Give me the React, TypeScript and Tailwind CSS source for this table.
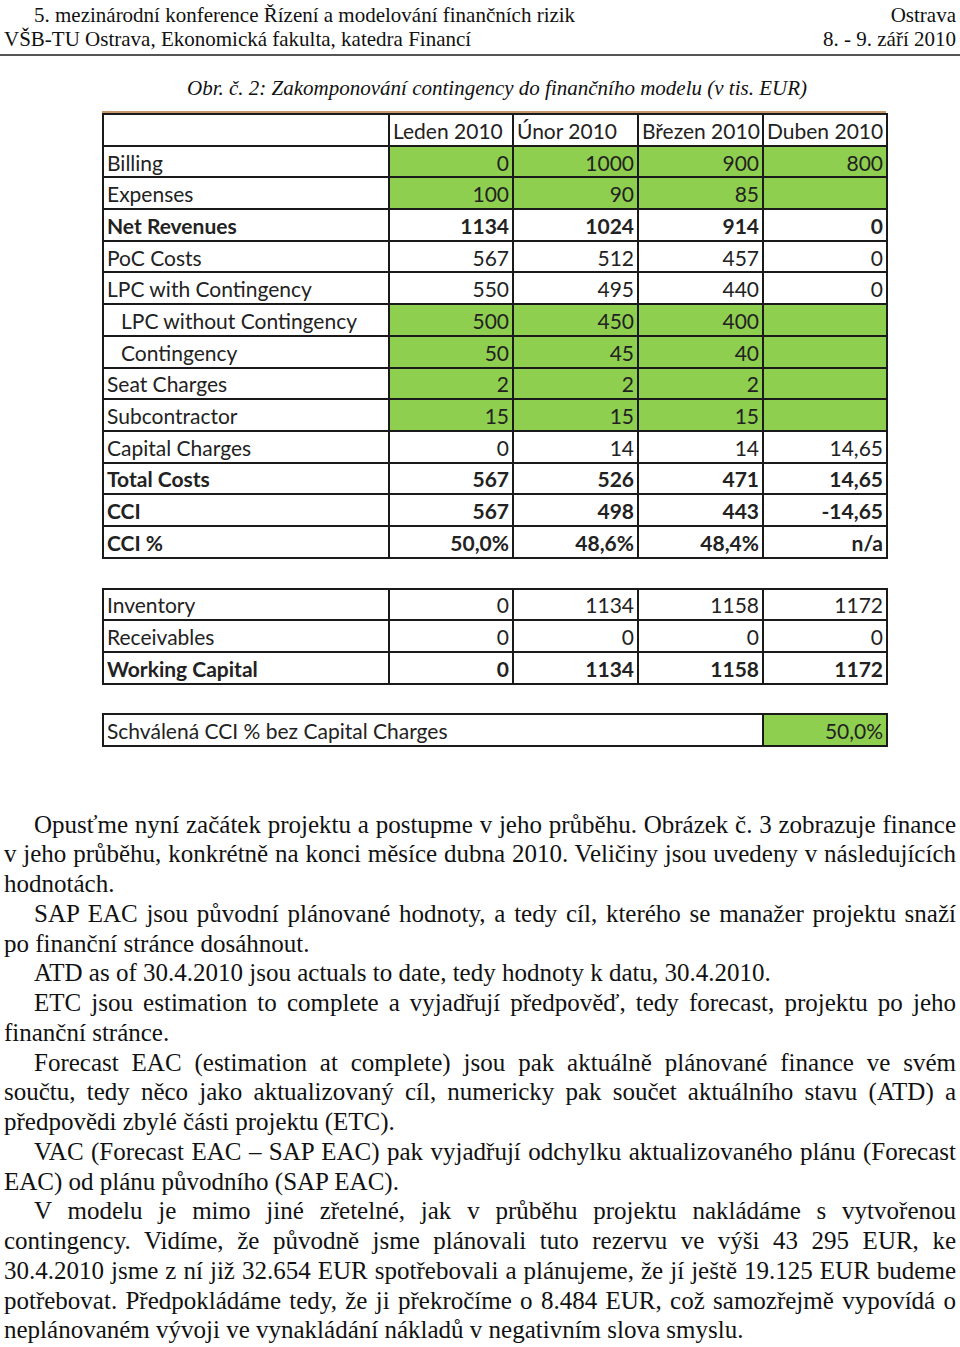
import React from "react";

type Row = {
  label: string;
  values: string[];
  bold?: boolean;
  indent?: boolean;
  green?: boolean;
};

const mainRows: Row[] = [
  { label: "Billing", values: ["0", "1000", "900", "800"], green: true },
  { label: "Expenses", values: ["100", "90", "85", ""], green: true },
  { label: "Net Revenues", values: ["1134", "1024", "914", "0"], bold: true },
  { label: "PoC Costs", values: ["567", "512", "457", "0"] },
  { label: "LPC with Contingency", values: ["550", "495", "440", "0"] },
  { label: "LPC without Contingency", values: ["500", "450", "400", ""], indent: true, green: true },
  { label: "Contingency", values: ["50", "45", "40", ""], indent: true, green: true },
  { label: "Seat Charges", values: ["2", "2", "2", ""], green: true },
  { label: "Subcontractor", values: ["15", "15", "15", ""], green: true },
  { label: "Capital Charges", values: ["0", "14", "14", "14,65"] },
  { label: "Total Costs", values: ["567", "526", "471", "14,65"], bold: true },
  { label: "CCI", values: ["567", "498", "443", "-14,65"], bold: true },
  { label: "CCI %", values: ["50,0%", "48,6%", "48,4%", "n/a"], bold: true },
];

const capitalRows: Row[] = [
  { label: "Inventory", values: ["0", "1134", "1158", "1172"] },
  { label: "Receivables", values: ["0", "0", "0", "0"] },
  { label: "Working Capital", values: ["0", "1134", "1158", "1172"], bold: true },
];

const months = ["Leden 2010", "Únor 2010", "Březen 2010", "Duben 2010"];

// one printed line of the paragraph text; full lines are justified edge to edge
const lines: { text: string; indent?: boolean; full?: boolean }[] = [
  { text: "Opusťme nyní začátek projektu a postupme v jeho průběhu. Obrázek č. 3 zobrazuje finance", indent: true, full: true },
  { text: "v jeho průběhu, konkrétně na konci měsíce dubna 2010. Veličiny jsou uvedeny v následujících", full: true },
  { text: "hodnotách." },
  { text: "SAP EAC jsou původní plánované hodnoty, a tedy cíl, kterého se manažer projektu snaží", indent: true, full: true },
  { text: "po finanční stránce dosáhnout." },
  { text: "ATD as of 30.4.2010 jsou actuals to date, tedy hodnoty k datu, 30.4.2010.", indent: true },
  { text: "ETC jsou estimation to complete a vyjadřují předpověď, tedy forecast, projektu po jeho", indent: true, full: true },
  { text: "finanční stránce." },
  { text: "Forecast EAC (estimation at complete) jsou pak aktuálně plánované finance ve svém", indent: true, full: true },
  { text: "součtu, tedy něco jako aktualizovaný cíl, numericky pak součet aktuálního stavu (ATD) a", full: true },
  { text: "předpovědi zbylé části projektu (ETC)." },
  { text: "VAC (Forecast EAC – SAP EAC) pak vyjadřují odchylku aktualizovaného plánu (Forecast", indent: true, full: true },
  { text: "EAC) od plánu původního (SAP EAC)." },
  { text: "V modelu je mimo jiné zřetelné, jak v průběhu projektu nakládáme s vytvořenou", indent: true, full: true },
  { text: "contingency. Vidíme, že původně jsme plánovali tuto rezervu ve výši 43 295 EUR, ke", full: true },
  { text: "30.4.2010 jsme z ní již 32.654 EUR spotřebovali a plánujeme, že jí ještě 19.125 EUR budeme", full: true },
  { text: "potřebovat. Předpokládáme tedy, že ji překročíme o 8.484 EUR, což samozřejmě vypovídá o", full: true },
  { text: "neplánovaném vývoji ve vynakládání nákladů v negativním slova smyslu." },
];

function DataRow({ row }: { row: Row }) {
  const weight = row.bold ? "font-bold" : "font-normal";
  return (
    <tr className="h-[31.7px]">
      <td className={`border-2 border-[#1a1a1a] pt-[2px] ${row.indent ? "pl-[17px]" : "pl-[3px]"} ${weight}`}>{row.label}</td>
      {row.values.map((v, i) => (
        <td
          key={i}
          className={`border-2 border-[#1a1a1a] pt-[2px] pr-[3px] text-right ${weight} ${row.green ? "bg-[#8fcf4f]" : ""}`}
        >
          {v}
        </td>
      ))}
    </tr>
  );
}

function ColGroup() {
  return (
    <colgroup>
      <col className="w-[286px]" />
      <col className="w-[124px]" />
      <col className="w-[125px]" />
      <col className="w-[125px]" />
      <col className="w-[124px]" />
    </colgroup>
  );
}

export default function App() {
  return (
    <div className="w-[960px] min-h-[1347px] bg-white text-[#111] font-['Liberation_Serif',serif]">
      {/* Header */}
      <div className="px-[4px] pt-[3px] text-[21px] leading-[24px]">
        <div className="flex justify-between">
          <span className="pl-[30px]">5. mezinárodní konference Řízení a modelování finančních rizik</span>
          <span>Ostrava</span>
        </div>
        <div className="flex justify-between">
          <span>VŠB-TU Ostrava, Ekonomická fakulta, katedra Financí</span>
          <span>8. - 9. září 2010</span>
        </div>
      </div>
      <div className="mt-[3px] h-[2px] bg-[#555]" />

      {/* Caption */}
      <div className="mt-[20px] text-center italic text-[21px] leading-[24px]">
        <span className="pl-[34px]">Obr. č. 2: Zakomponování contingency do finančního modelu (v tis. EUR)</span>
      </div>

      {/* Figure */}
      <div className="mt-[11px] ml-[102px] w-[784px] font-['Lato',sans-serif] text-[21px] leading-[24px] text-[#222]">
        <div className="h-[2px] bg-[#c49a6c]" />
        <table className="w-[784px] table-fixed border-collapse">
          <ColGroup />
          <tbody>
            <tr className="h-[31.7px]">
              <td className="border-2 border-[#1a1a1a]" />
              {months.map((m) => (
                <td key={m} className="border-2 border-[#1a1a1a] pt-[2px] pl-[3px] whitespace-nowrap overflow-hidden">
                  {m}
                </td>
              ))}
            </tr>
            {mainRows.map((r) => (
              <DataRow key={r.label} row={r} />
            ))}
          </tbody>
        </table>

        <table className="mt-[29px] w-[784px] table-fixed border-collapse">
          <ColGroup />
          <tbody>
            {capitalRows.map((r) => (
              <DataRow key={r.label} row={r} />
            ))}
          </tbody>
        </table>

        <table className="mt-[28px] w-[784px] table-fixed border-collapse">
          <ColGroup />
          <tbody>
            <tr className="h-[32px]">
              <td colSpan={4} className="border-2 border-[#1a1a1a] pt-[2px] pl-[3px]">
                Schválená CCI % bez Capital Charges
              </td>
              <td className="border-2 border-[#1a1a1a] bg-[#8fcf4f] pt-[2px] pr-[3px] text-right">50,0%</td>
            </tr>
          </tbody>
        </table>
      </div>

      {/* Body text */}
      <div className="mt-[63px] px-[4px] text-[25px] leading-[29.75px]">
        {lines.map((l, i) => (
          <div
            key={i}
            className={`whitespace-nowrap ${l.indent ? "pl-[30px]" : ""} ${l.full ? "text-justify [text-align-last:justify]" : ""}`}
          >
            {l.text}
          </div>
        ))}
      </div>
    </div>
  );
}
